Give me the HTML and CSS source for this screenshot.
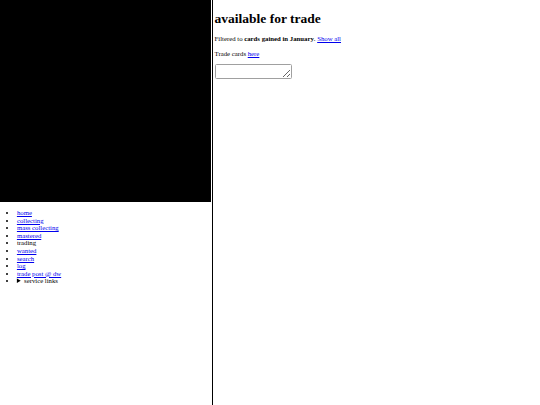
FILE: index.html
```html
<!DOCTYPE html>
<html>
<head>
<meta charset="utf-8">
<link rel="stylesheet" href="styles.css">
</head>
<body>
<div class="layout">
  <div class="sidebar">
    <div class="banner"></div>
    <ul class="nav">
      <li><a href="#">home</a></li>
      <li><a href="#">collecting</a></li>
      <li><a href="#">mass collecting</a></li>
      <li><a href="#">mastered</a></li>
      <li>trading</li>
      <li><a href="#">wanted</a></li>
      <li><a href="#">search</a></li>
      <li><a href="#">log</a></li>
      <li><a href="#">trade post @ dw</a></li>
      <li><details><summary>service links</summary></details></li>
    </ul>
  </div>
  <div class="main">
    <h1>available for trade</h1>
    <p>Filtered to <b>cards gained in January</b>. <a href="#">Show all</a></p>
    <p>Trade cards <a href="#">here</a></p>
    <textarea class="box"></textarea>
  </div>
</div>
</body>
</html>
```
FILE: styles.css
```css
html, body {
  margin: 0;
  padding: 0;
  background: #fff;
}
body {
  font-family: "Liberation Serif", "Times New Roman", serif;
  font-size: 6.75px;
  line-height: 7.6px;
  color: #000;
}
.layout {
  display: flex;
  min-height: 405px;
}
.sidebar {
  width: 212px;
  flex: none;
  border-right: 1px solid #000;
}
.banner {
  width: 211px;
  height: 202px;
  background: #000;
}
.nav {
  margin: 7px 0;
  padding-left: 16.9px;
}
a {
  color: #0000ee;
}
.main {
  padding-left: 1.6px;
}
h1 {
  font-size: 13.5px;
  line-height: 15.5px;
  margin: 11.2px 0 8.2px;
}
p {
  margin: 7.1px 0;
}
.box {
  display: block;
  width: 77.5px;
  height: 15px;
  box-sizing: border-box;
  font-size: 5.6px;
  border: 1px solid #a0a0a0;
  border-radius: 1.5px;
  padding: 1px;
  margin: 7px 0 0;
}
```
